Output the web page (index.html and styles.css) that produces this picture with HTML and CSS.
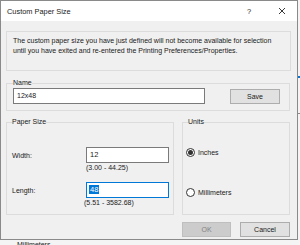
FILE: index.html
```html
<!DOCTYPE html>
<html lang="en">
<head>
    <meta charset="UTF-8">
    <title>Custom Paper Size</title>
    <link rel="stylesheet" href="styles.css">
</head>
<body>
    <div class="dialog">
        <div class="titlebar">
            <span class="title">Custom Paper Size</span>
            <span class="help">?</span>
            <span class="close">
                <svg width="8" height="8" viewBox="0 0 8 8"><path d="M1 1 L7 7 M7 1 L1 7" stroke="#222" stroke-width="0.9" fill="none"/></svg>
            </span>
        </div>

        <div class="content">
            <div class="notice">
                The custom paper size you have just defined will not become available for selection<br>
                until you have exited and re-entered the Printing Preferences/Properties.
            </div>

            <fieldset class="group name-group">
                <legend>Name</legend>
                <div class="name-row">
                    <div class="textbox name-box">12x48</div>
                    <button class="btn">Save</button>
                </div>
            </fieldset>

            <div class="groups">
                <fieldset class="group paper-group">
                    <legend>Paper Size</legend>
                    <div class="field first">
                        <span class="label">Width:</span>
                        <div class="textbox size-box">12</div>
                    </div>
                    <div class="range">(3.00 - 44.25)</div>
                    <div class="field">
                        <span class="label">Length:</span>
                        <div class="textbox size-box focused"><span class="sel">48</span></div>
                    </div>
                    <div class="range wide">(5.51 - 3582.68)</div>
                </fieldset>

                <fieldset class="group units-group">
                    <legend>Units</legend>
                    <div class="radio first"><span class="dot checked"></span>Inches</div>
                    <div class="radio"><span class="dot"></span>Millimeters</div>
                </fieldset>
            </div>

            <div class="buttons">
                <button class="btn" disabled>OK</button>
                <button class="btn">Cancel</button>
            </div>
        </div>
    </div>

    <!-- bits of the window behind -->
    <div class="behind-right">
        <div class="blue-line"></div>
        <div class="grey-line"></div>
    </div>
    <div class="behind-bottom">Millimeters</div>
</body>
</html>
```

FILE: styles.css
```css
body {
    margin: 0;
    width: 300px;
    height: 245px;
    overflow: hidden;
    position: relative;
    background: #f4f4f4;
    font-family: 'Liberation Sans', Arial, sans-serif;
    font-size: 7px;
    color: #1a1a1a;
}

.dialog {
    width: 298px;
    height: 240px;
    box-sizing: border-box;
    border: 1px solid #8a8a8a;
    background: #f0f0f0;
    position: relative;
    z-index: 1;
}

.titlebar {
    height: 20px;
    background: #fff;
    display: flex;
    align-items: center;
    padding-left: 6px;
}

.title {
    flex: 1;
    font-size: 7.4px;
}

.help {
    width: 10px;
    font-size: 7.5px;
    color: #222;
    margin-right: 21px;
}

.close {
    width: 8px;
    height: 8px;
    margin-right: 11px;
    display: flex;
}

.content {
    padding: 0 7px 0 5px;
}

.notice {
    margin-top: 10px;
    margin-right: -1px;
    height: 40px;
    box-sizing: border-box;
    border: 1px solid #dcdcdc;
    padding: 4px 6px;
    line-height: 10px;
    white-space: nowrap;
}

.group {
    margin: 0;
    border: 1px solid #dcdcdc;
    min-width: 0;
}

.group legend {
    padding: 0;
    line-height: 10px;
}

.name-group {
    margin-top: 7px;
    padding: 0 6px 6px 6px;
}

.name-row {
    display: flex;
    align-items: center;
    gap: 25px;
}

.textbox {
    box-sizing: border-box;
    height: 16px;
    background: #fff;
    border: 1px solid #7a7a7a;
    padding: 0 3px;
    line-height: 14px;
    font-size: 7.5px;
}

.name-box {
    width: 192px;
    font-size: 7px;
}

.btn {
    font-family: inherit;
    font-size: 7px;
    width: 50px;
    height: 15px;
    padding: 0;
    background: #e1e1e1;
    border: 1px solid #adadad;
    color: #1a1a1a;
}

.btn:disabled {
    background: #cccccc;
    border-color: #bfbfbf;
    color: #838383;
}

.groups {
    margin-top: 6px;
    display: flex;
    gap: 8px;
}

.paper-group {
    width: 168px;
    box-sizing: border-box;
    padding: 0 4px 6px 5px;
}

.units-group {
    flex: 1;
    padding: 0 4px 6px 5px;
}

.field {
    display: flex;
    align-items: center;
    margin-top: 9px;
}

.field.first {
    margin-top: 20px;
}

.label {
    width: 74px;
}

.size-box {
    width: 83px;
}

.focused {
    border-color: #0078d7;
    padding-left: 2px;
}

.sel {
    background: #0078d7;
    color: #fff;
    padding: 0 1px;
}

.range {
    margin-left: 74px;
    line-height: 10px;
}

.range.wide {
    margin-left: 72px;
}

.radio {
    display: flex;
    align-items: center;
    height: 10px;
    margin-top: 30px;
    margin-left: -2px;
    gap: 3px;
}

.radio.first {
    margin-top: 20px;
}

.dot {
    width: 9px;
    height: 9px;
    box-sizing: border-box;
    border: 1px solid #333;
    border-radius: 50%;
    background: #fff;
    display: flex;
    align-items: center;
    justify-content: center;
}

.dot.checked::after {
    content: "";
    width: 5px;
    height: 5px;
    border-radius: 50%;
    background: #333;
}

.buttons {
    margin-top: 7px;
    display: flex;
    justify-content: flex-end;
    gap: 9px;
}

.buttons .btn:first-child {
    width: 49px;
}

.behind-right {
    position: absolute;
    left: 298px;
    top: 0;
    width: 2px;
    height: 245px;
}

.blue-line {
    margin-top: 76px;
    height: 2px;
    background: #0078d7;
}

.grey-line {
    margin-top: 35px;
    height: 1px;
    background: #8a8a8a;
}

.behind-bottom {
    position: absolute;
    left: 17px;
    top: 241px;
    font-size: 7px;
    line-height: 8px;
    color: #222;
}
```
